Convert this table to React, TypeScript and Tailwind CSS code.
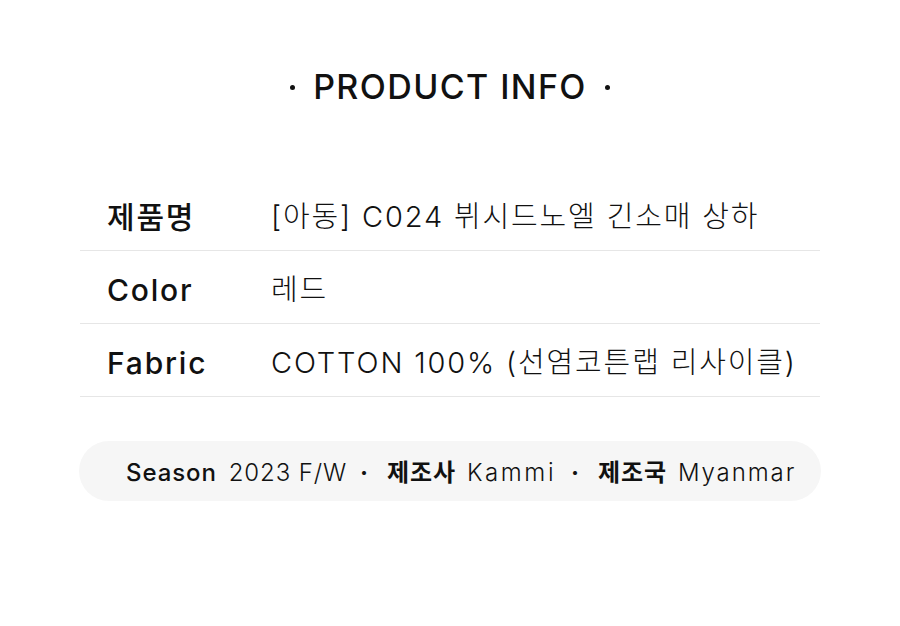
import React from "react";

const font = { fontFamily: 'Inter, "Noto Sans CJK KR", sans-serif' };

export default function App() {
  const rows = [
    { label: "제품명", value: "[아동] C024 뷔시드노엘 긴소매 상하" },
    { label: "Color", value: "레드" },
    { label: "Fabric", value: "COTTON 100% (선염코튼랩 리사이클)" },
  ];
  return (
    <div className="w-[900px] h-[626px] bg-white text-[#111]" style={font}>
      <div className="pt-[63px] flex items-center justify-center gap-[18px]">
        <span className="w-[5px] h-[5px] rounded-full bg-[#111]" />
        <h1 className="text-[34px] leading-[48px] font-medium tracking-[1.4px]">PRODUCT INFO</h1>
        <span className="w-[5px] h-[5px] rounded-full bg-[#111]" />
      </div>
      <div className="mx-[80px] mt-[67px]">
        {rows.map((r) => (
          <div key={r.label} className="flex items-center h-[73px] pt-[6px] border-b border-[#e6e6e6]">
            <div className="w-[191px] pl-[27px] text-[30px] font-medium tracking-[1.8px]">{r.label}</div>
            <div className="text-[29px] font-light tracking-[1.85px]">{r.value}</div>
          </div>
        ))}
      </div>
      <div className="mx-[79px] mt-[44px] h-[60px] rounded-full bg-[#f6f6f6] flex items-center pt-[3px] pl-[47px] text-[24px] tracking-[0.9px]">
        <span className="font-medium">Season</span>
        <span className="ml-[12px] font-light">2023 F/W</span>
        <span className="ml-[13px] mr-[18px] font-bold">·</span>
        <span className="font-bold">제조사</span>
        <span className="ml-[11px] font-light tracking-[2.6px]">Kammi</span>
        <span className="ml-[15px] mr-[18px] font-bold">·</span>
        <span className="font-bold">제조국</span>
        <span className="ml-[11px] font-light tracking-[1.9px]">Myanmar</span>
      </div>
    </div>
  );
}
